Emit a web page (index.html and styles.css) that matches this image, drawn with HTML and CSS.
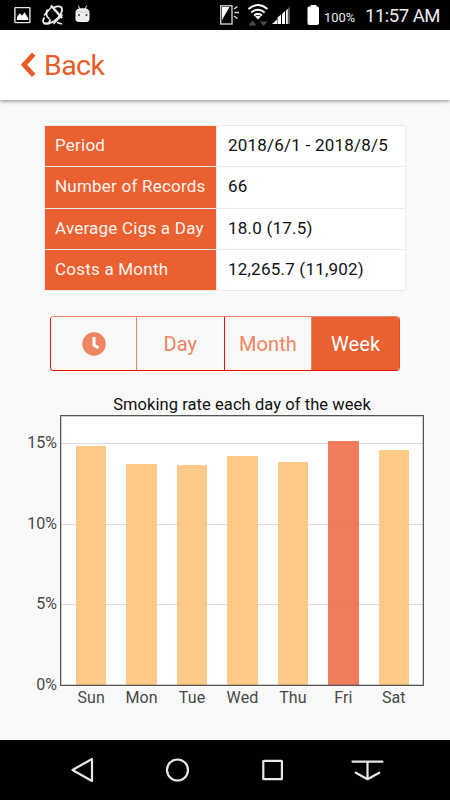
FILE: index.html
```html
<!DOCTYPE html>
<html lang="en">
<head>
  <meta charset="UTF-8">
  <meta name="viewport" content="width=device-width, initial-scale=1">
  <title>Smoking Report</title>
  <link rel="stylesheet" href="styles.css">
</head>
<body>
  <div class="status-bar">
    <svg class="status-left" width="100" height="30" viewBox="0 0 100 30">
      <rect x="14.9" y="7.6" width="15" height="15" rx="0.5" fill="none" stroke="#e4e4e4" stroke-width="1.4"/>
      <path d="M17 20v-3l3-3.8 2 2.6 2.5-3.5 3.7 6V20z" fill="#fff"/>
      <g fill="none" stroke="#eee">
        <path d="M51 5.500l11 12.500" stroke-width="2.300"/>
        <path d="M44 15.500l8-9M53.500 24l9-9.500" stroke-width="1.500"/>
        <path d="M54 7.500c3.500-2 7.500-1.500 8 1.500.4 5-5.500 12-11.500 14-4.500 1.500-7.500.5-7.500-2 0-1 .5-2 1.500-3.500M47.500 9.500c-1.500 3-1.500 7 2 9.500" stroke-width="1.800"/>
        <path d="M43.500 23.500h5l2-4M57 22.500l5 1.500" stroke-width="1.800"/>
      </g>
      <path d="M75.500 12.500c0-2 1.500-3.500 3.500-4l-1-2.700.8-.3 1.200 2.800h5l1.200-2.800.8.3-1 2.700c2 .5 3.500 2 3.500 4v6.500c0 2-1.300 3-3 3h-8c-1.700 0-3-1-3-3z" fill="#eee"/>
      <path d="M75.500 12h14" stroke="#bbb" stroke-width=".7"/>
      <circle cx="79" cy="15" r="1" fill="#333"/>
      <circle cx="86.500" cy="15" r="1" fill="#333"/>
    </svg>
    <div class="status-right">
      <svg width="102" height="30" viewBox="0 0 102 30">
        <rect x="3.700" y="5.800" width="11.300" height="18.200" fill="none" stroke="#ccc" stroke-width="1.400"/>
        <path d="M5 7h7.500L5 20z" fill="#fff"/>
        <path d="M17 9l3.500-2.500M17.500 12.500H22M17 16l3.500 2.500" stroke="#ddd" stroke-width="1.500"/>
        <g fill="none" stroke="#fff" stroke-width="2">
          <path d="M31.500 9q9.500-8 19 0M34.300 12.500q6.700-5.500 13.400 0M37 15.500q4-3.200 8 0"/>
        </g>
        <path d="M38 16.500q3-1.600 6 0L41 19.500z" fill="#fff"/>
        <path d="M31.500 25.500l4-5 4 5zM42.500 21.500h8l-4 4.500z" fill="#4a4a4a"/>
        <path d="M55 24l5-4.500V24zM60.500 17.500l3.500-3V24h-3.500zM65 14l3-3v13h-3z" fill="#fff"/>
        <path d="M69 10.500l1.800-1.800V24H69z" fill="#fff"/>
        <path d="M71 8.500L73 6v18h-2z" fill="#555"/>
        <path d="M93.500 5h6v1.500h1q1.500 0 1.500 1.500v15q0 2-2 2h-7.500q-2 0-2-2V8q0-1.500 1.500-1.500h1.500z" fill="#fff"/>
      </svg>
      <span class="battery">100%</span>
      <span class="clock">11:57 AM</span>
    </div>
  </div>

  <div class="header">
    <a class="back-button" href="#">
      <svg width="16" height="26" viewBox="0 0 16 26">
        <path d="M12.700 2.200L3 12.800l9.700 10.600" fill="none" stroke="#ea5b25" stroke-width="4.700"/>
      </svg>
      <span>Back</span>
    </a>
  </div>

  <div class="container">
    <table class="summary">
      <tr><th>Period</th><td>2018/6/1 - 2018/8/5</td></tr>
      <tr><th>Number of Records</th><td>66</td></tr>
      <tr><th>Average Cigs a Day</th><td>18.0 (17.5)</td></tr>
      <tr><th>Costs a Month</th><td>12,265.7 (11,902)</td></tr>
    </table>

    <div class="segment">
      <button class="segment-button">
        <svg width="24" height="24" viewBox="0 0 24 24">
          <circle cx="12" cy="12" r="11.700" fill="#ef8460"/>
          <path d="M12 5V13l4.500 2.800" fill="none" stroke="#f9f9f9" stroke-width="3.200"/>
        </svg>
      </button>
      <button class="segment-button">Day</button>
      <button class="segment-button">Month</button>
      <button class="segment-button active">Week</button>
    </div>

    <div class="chart">
      <div class="chart-title">Smoking rate each day of the week</div>
      <div class="y-axis">
        <span>15%</span>
        <span>10%</span>
        <span>5%</span>
        <span>0%</span>
      </div>
      <div class="plot">
        <div class="grid-lines"><i></i><i></i><i></i></div>
        <div class="bars">
          <div class="bar" style="height: 239px"></div>
          <div class="bar" style="height: 221.500px"></div>
          <div class="bar" style="height: 220px"></div>
          <div class="bar" style="height: 229.500px"></div>
          <div class="bar" style="height: 222.700px"></div>
          <div class="bar highlight" style="height: 244.500px"></div>
          <div class="bar" style="height: 235px"></div>
        </div>
      </div>
      <div class="x-axis">
        <span>Sun</span>
        <span>Mon</span>
        <span>Tue</span>
        <span>Wed</span>
        <span>Thu</span>
        <span>Fri</span>
        <span>Sat</span>
      </div>
    </div>
  </div>

  <div class="nav-bar">
    <svg viewBox="0 0 34 34"><path d="M27 6v22L7.500 17z"/></svg>
    <svg viewBox="0 0 34 34"><circle cx="17.500" cy="17" r="10.500"/></svg>
    <svg viewBox="0 0 34 34"><rect x="7.300" y="7.800" width="18.600" height="18.400" rx="0.500"/></svg>
    <svg viewBox="0 0 34 34"><path d="M1.500 8.600h30M16.500 9v17M4.800 19.700l11.700 6.500 11.800-6.500"/></svg>
  </div>
</body>
</html>
```
FILE: styles.css
```css
* {
  box-sizing: border-box;
}
body {
  margin: 0;
  height: 800px;
  display: flex;
  flex-direction: column;
  overflow: hidden;
  font-family: Roboto, sans-serif;
  background: #f9f9f9;
  color: #111;
}

/* status bar */
.status-bar {
  height: 30px;
  flex: none;
  display: flex;
  justify-content: space-between;
  background: #000;
  color: #eee;
}
.status-right {
  display: flex;
  align-items: baseline;
  width: 250px;
  padding-left: 17px;
  line-height: 30px;
  white-space: nowrap;
}
.status-right svg {
  flex: none;
  align-self: center;
  margin-right: 5px;
  overflow: visible;
}
.battery {
  width: 32px;
  font-size: 12.9px;
  line-height: 33px;
}
.clock {
  margin-left: 9px;
  font-size: 18.5px;
  line-height: 32px;
  letter-spacing: -0.5px;
}

/* header */
.header {
  height: 70px;
  flex: none;
  padding-left: 19px;
  background: #fff;
  box-shadow: 0 1px 4px rgba(0, 0, 0, 0.45);
}
.back-button {
  display: flex;
  align-items: center;
  height: 70px;
  color: #ea5b25;
  font-size: 28.5px;
  letter-spacing: -0.6px;
  text-decoration: none;
}
.back-button svg {
  margin: 0 7px 0 2px;
}

.container {
  flex: 1;
  padding-top: 25px;
}

/* summary table */
.summary {
  width: 362px;
  height: 166px;
  margin: 0 0 0 44px;
  border-collapse: collapse;
  font-size: 17px;
  letter-spacing: 0.22px;
}
.summary th,
.summary td {
  padding: 0 10px 2px;
  border: 1px solid #eaeaea;
  font-weight: 400;
  text-align: left;
}
.summary th {
  width: 172px;
  background: #ea6030;
  color: #fff4ef;
}
.summary td {
  padding-left: 11px;
  background: #fff;
}

/* segmented control */
.segment {
  display: flex;
  width: 350px;
  height: 55px;
  margin: 25px 0 0 50px;
  border: 1px solid #f20d00;
  border-top-color: #ef8566;
  border-radius: 4px;
  overflow: hidden;
}
.segment-button {
  flex: 1;
  display: flex;
  align-items: center;
  justify-content: center;
  padding: 1px 0 0;
  border: 0;
  border-right: 1px solid #ee8363;
  background: #f9f9f9;
  color: #ef8460;
  font-family: inherit;
  font-size: 20px;
  letter-spacing: 0.1px;
}
.segment-button:nth-child(1) {
  flex: none;
  width: 86px;
}
.segment-button:nth-child(2) {
  border-right-color: #f20d00;
}
.segment-button.active {
  border-right: 0;
  background: #ea6030;
  color: #fff;
}
.segment:has(.active:last-child) {
  border-right-color: #e2511b;
}

/* chart */
.chart {
  display: grid;
  grid-template-columns: 60px 364px;
  grid-template-rows: 19px 271px 22px;
  margin-top: 25px;
}
.chart-title {
  grid-column: 2;
  font-size: 16.5px;
  line-height: 17px;
  letter-spacing: 0.07px;
  text-align: center;
}
.y-axis {
  grid-column: 1;
  display: flex;
  flex-direction: column;
  justify-content: space-between;
  height: 262px;
  margin-top: 18px;
  padding-right: 3px;
  font-size: 16px;
  line-height: 20px;
  text-align: right;
  color: #484848;
}
.plot {
  display: grid;
  border: 1px solid #555;
  outline: 1px solid rgba(85, 85, 85, 0.3);
  outline-offset: -2px;
  background: #fff;
}
.grid-lines,
.bars {
  grid-area: 1 / 1;
}
.grid-lines {
  display: grid;
  grid-template-rows: repeat(3, 80.700px);
  align-content: end;
}
.grid-lines i {
  border-top: 1px solid #ddd;
}
.bars {
  display: grid;
  grid-template-columns: repeat(7, 1fr);
  align-items: end;
  justify-items: center;
  padding: 0 4px 0 5px;
}
.bar {
  width: 30.500px;
  background: rgba(255, 191, 115, 0.85);
}
.bar.highlight {
  background: rgba(237, 106, 65, 0.87);
}
.x-axis {
  grid-column: 2;
  display: grid;
  grid-template-columns: repeat(7, 1fr);
  padding: 0 5px 0 6px;
  font-size: 16px;
  line-height: 23px;
  letter-spacing: 0.1px;
  text-align: center;
  color: #484848;
}

/* navigation bar */
.nav-bar {
  flex: none;
  display: flex;
  justify-content: space-between;
  height: 60px;
  padding: 13px 65px;
  background: #000;
}
.nav-bar svg {
  width: 34px;
  height: 34px;
  fill: none;
  stroke: #e8e8e8;
  stroke-width: 2.200;
  stroke-linejoin: round;
  stroke-linecap: round;
}
```
